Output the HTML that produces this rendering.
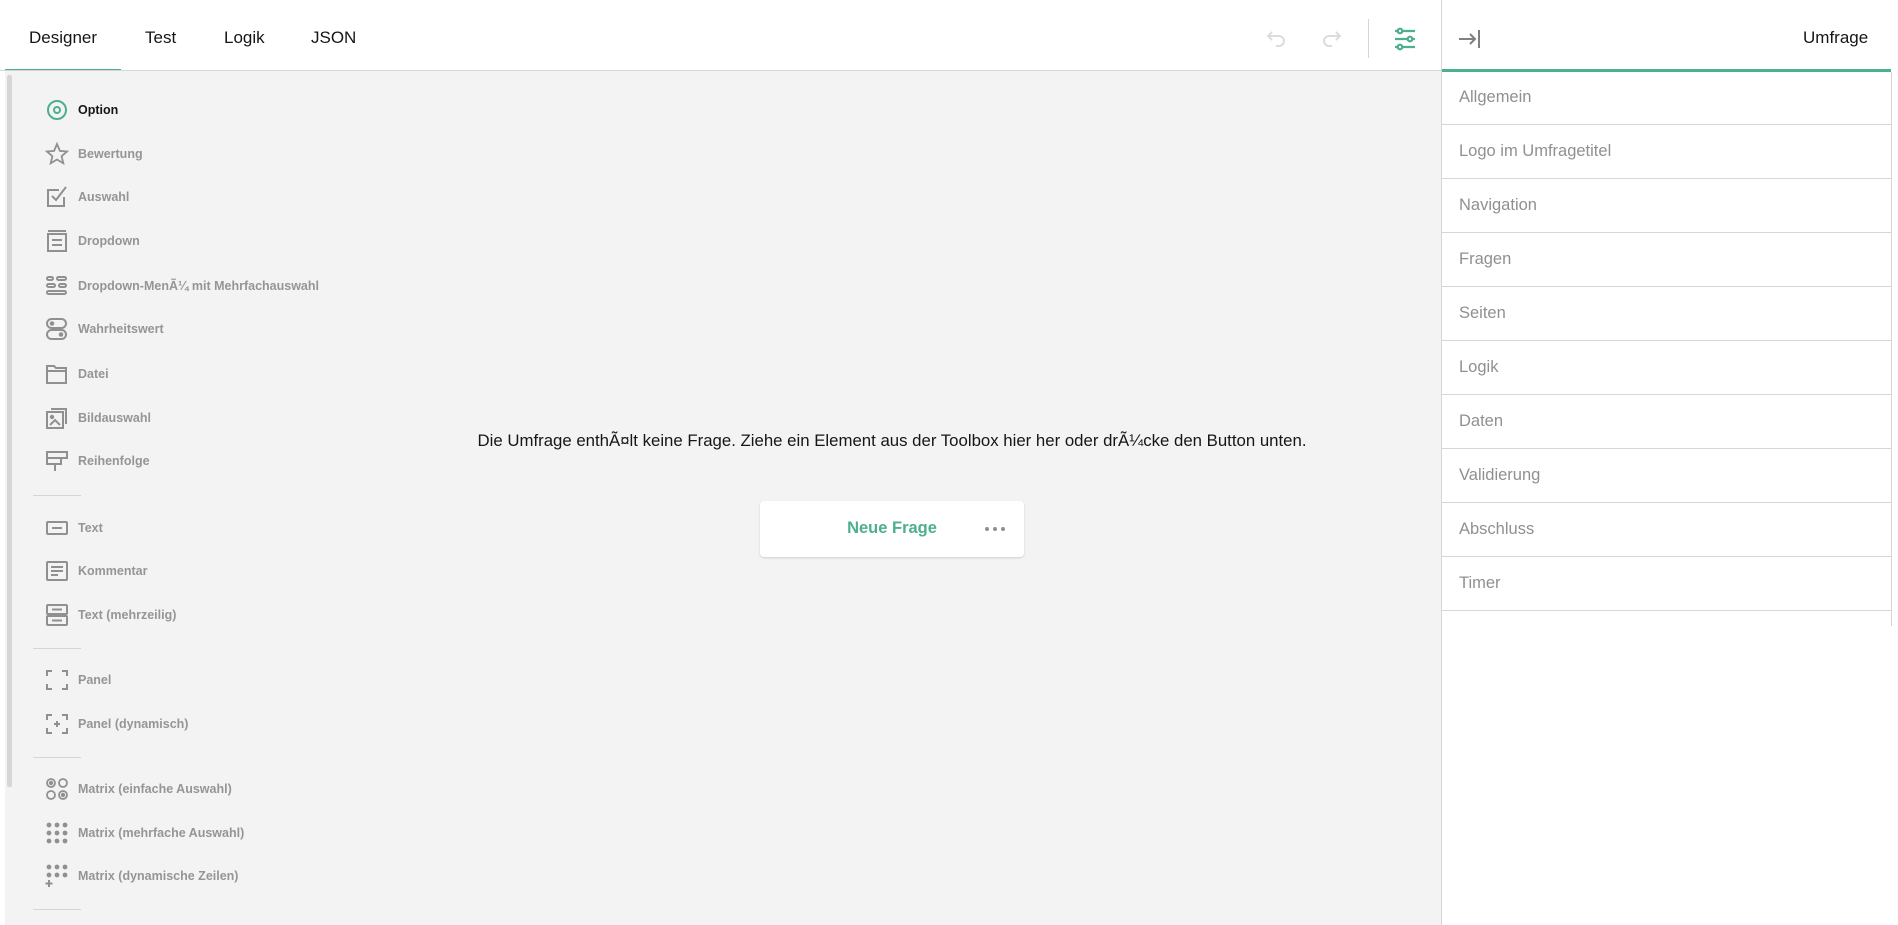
<!DOCTYPE html>
<html><head><meta charset="utf-8">
<style>
*{margin:0;padding:0;box-sizing:border-box}
body{width:1898px;height:925px;overflow:hidden;background:#fff;font-family:"Liberation Sans",sans-serif;position:relative}
.abs{position:absolute}
.tab{position:absolute;top:28px;font-size:17px;color:#161616}
.canvas{position:absolute;left:5px;top:71px;width:1436px;height:854px;background:#f3f3f3}
.item{position:absolute;left:45px;height:24px;display:flex;align-items:center}
.item svg{width:24px;height:24px;margin-right:9px;flex:none}
.item span{font-size:12.5px;font-weight:bold;color:#959595;white-space:nowrap}
.sep{position:absolute;left:33px;width:48px;height:1px;background:#d6d6d6}
.row{position:absolute;left:1442px;width:449px;height:54px;border-bottom:1px solid #d6d6d6;font-size:16.5px;color:#909090;padding-left:17px;line-height:53px}
</style></head><body>
<div class="tab" style="left:29px">Designer</div>
<div class="tab" style="left:145px">Test</div>
<div class="tab" style="left:224px">Logik</div>
<div class="tab" style="left:311px">JSON</div>
<div class="abs" style="left:5px;top:69px;width:116px;height:2px;background:#4caf8f"></div>
<div class="abs" style="left:0;top:70px;width:1442px;height:1px;background:#d6d6d6"></div>

<svg class="abs" style="left:1264px;top:26px" width="24" height="24" viewBox="0 0 24 24" fill="none" stroke="#dcdcdc" stroke-width="2"><path d="M8 6 L4 10 L8 14 M4 10 H15 a5 5 0 0 1 0 10 H12"/></svg>
<svg class="abs" style="left:1320px;top:26px" width="24" height="24" viewBox="0 0 24 24" fill="none" stroke="#dcdcdc" stroke-width="2"><path d="M16 6 L20 10 L16 14 M20 10 H9 a5 5 0 0 0 0 10 H12"/></svg>
<div class="abs" style="left:1368px;top:19px;width:1px;height:39px;background:#d6d6d6"></div>
<svg class="abs" style="left:1393px;top:27px" width="24" height="24" viewBox="0 0 24 24" fill="none" stroke="#4caf8f" stroke-width="2.2"><circle cx="7" cy="4" r="2.3"/><path d="M9.5 4H22M2 4h2.5"/><circle cx="17" cy="12" r="2.3"/><path d="M2 12h12.5M19.5 12H22"/><circle cx="7" cy="20" r="2.3"/><path d="M9.5 20H22M2 20h2.5"/></svg>

<div class="abs" style="left:1441px;top:0;width:1px;height:925px;background:#d6d6d6"></div>
<svg class="abs" style="left:1458px;top:27px" width="24" height="24" viewBox="0 0 24 24" fill="none" stroke="#808080" stroke-width="2"><path d="M1 12H17M12 7l5 5-5 5"/><path d="M21 3V21"/></svg>
<div class="abs" style="left:1803px;top:28px;font-size:17px;color:#161616">Umfrage</div>
<div class="abs" style="left:1442px;top:69px;width:449px;height:3px;background:#4caf8f"></div>
<div class="abs" style="left:1891px;top:72px;width:1px;height:554px;background:#d6d6d6"></div>
<div class="row" style="top:71px">Allgemein</div>
<div class="row" style="top:125px">Logo im Umfragetitel</div>
<div class="row" style="top:179px">Navigation</div>
<div class="row" style="top:233px">Fragen</div>
<div class="row" style="top:287px">Seiten</div>
<div class="row" style="top:341px">Logik</div>
<div class="row" style="top:395px">Daten</div>
<div class="row" style="top:449px">Validierung</div>
<div class="row" style="top:503px">Abschluss</div>
<div class="row" style="top:557px">Timer</div>

<div class="canvas"></div>
<div class="abs" style="left:7px;top:75px;width:5px;height:712px;background:#d6d6d6;border-radius:2px"></div>

<div class="item" style="top:98px"><svg viewBox="0 0 24 24" fill="none" stroke="#4caf8f" stroke-width="2"><circle cx="12" cy="12" r="9"/><circle cx="12" cy="12" r="3"/></svg><span style="color:#161616">Option</span></div>
<div class="item" style="top:142px"><svg viewBox="0 0 24 24" fill="none" stroke="#909090" stroke-width="1.8"><path d="M12 2l2.9 6.9 7.1.6-5.4 4.7 1.7 7.1L12 17.5 5.7 21.3l1.7-7.1L2 9.5l7.1-.6z"/></svg><span>Bewertung</span></div>
<div class="item" style="top:185px"><svg viewBox="0 0 24 24" fill="none" stroke="#909090" stroke-width="2"><path d="M19 12v9H3V5h11"/><path d="M7 11l4 4 10-13"/></svg><span>Auswahl</span></div>
<div class="item" style="top:229px"><svg viewBox="0 0 24 24" fill="none" stroke="#909090" stroke-width="2"><rect x="3" y="5" width="18" height="17"/><path d="M3 2h18M7 11h10M7 16h10"/></svg><span>Dropdown</span></div>
<div class="item" style="top:274px"><svg viewBox="0 0 24 24" fill="none" stroke="#909090" stroke-width="2"><rect x="2" y="3" width="6" height="3" rx="1.5"/><rect x="12" y="3" width="9" height="3" rx="1.5"/><rect x="2" y="10" width="8" height="3" rx="1.5"/><rect x="14" y="10" width="7" height="3" rx="1.5"/><rect x="2" y="17" width="19" height="3" rx="1.5"/></svg><span>Dropdown-MenÃ¼ mit Mehrfachauswahl</span></div>
<div class="item" style="top:317px"><svg viewBox="0 0 24 24" fill="none" stroke="#909090" stroke-width="2"><rect x="2" y="2" width="19" height="9" rx="4.5"/><rect x="2" y="13" width="19" height="9" rx="4.5"/><circle cx="7" cy="6.5" r="1.3" fill="#909090"/><circle cx="16" cy="17.5" r="1.3" fill="#909090"/></svg><span>Wahrheitswert</span></div>
<div class="item" style="top:362px"><svg viewBox="0 0 24 24" fill="none" stroke="#909090" stroke-width="2"><path d="M2 4h7l2 2h10v15H2z M2 9h19"/></svg><span>Datei</span></div>
<div class="item" style="top:406px"><svg viewBox="0 0 24 24" fill="none" stroke="#909090" stroke-width="2"><rect x="2" y="6" width="16" height="16"/><path d="M6 3h15v15"/><path d="M5 19l5-5 5 5"/><circle cx="7" cy="11" r="1.2" fill="#909090"/></svg><span>Bildauswahl</span></div>
<div class="item" style="top:449px"><svg viewBox="0 0 24 24" fill="none" stroke="#909090" stroke-width="2"><path d="M2 3h20v6H2zM2 9h14v6H2zM2 15h8v7"/></svg><span>Reihenfolge</span></div>
<div class="sep" style="top:495px"></div>
<div class="item" style="top:516px"><svg viewBox="0 0 24 24" fill="none" stroke="#909090" stroke-width="2"><rect x="2" y="6" width="20" height="12" rx="1"/><path d="M7 12h10"/></svg><span>Text</span></div>
<div class="item" style="top:559px"><svg viewBox="0 0 24 24" fill="none" stroke="#909090" stroke-width="2"><rect x="2" y="3" width="20" height="18" rx="1"/><path d="M6 8h12M6 12h12M6 16h7"/></svg><span>Kommentar</span></div>
<div class="item" style="top:603px"><svg viewBox="0 0 24 24" fill="none" stroke="#909090" stroke-width="2"><rect x="2" y="2" width="20" height="9" rx="1"/><rect x="2" y="13" width="20" height="9" rx="1"/><path d="M7 6.5h10M7 17.5h10"/></svg><span>Text (mehrzeilig)</span></div>
<div class="sep" style="top:648px"></div>
<div class="item" style="top:668px"><svg viewBox="0 0 24 24" fill="none" stroke="#909090" stroke-width="2"><path d="M2 8V3h5M17 3h5v5M22 16v5h-5M7 21H2v-5"/></svg><span>Panel</span></div>
<div class="item" style="top:712px"><svg viewBox="0 0 24 24" fill="none" stroke="#909090" stroke-width="2"><path d="M2 8V3h5M17 3h5v5M22 16v5h-5M7 21H2v-5M12 9v6M9 12h6"/></svg><span>Panel (dynamisch)</span></div>
<div class="sep" style="top:757px"></div>
<div class="item" style="top:777px"><svg viewBox="0 0 24 24" fill="none" stroke="#909090" stroke-width="1.8"><circle cx="6" cy="6" r="4"/><circle cx="6" cy="6" r="1.3" fill="#909090"/><circle cx="18" cy="6" r="4"/><circle cx="6" cy="18" r="4"/><circle cx="18" cy="18" r="4"/><circle cx="18" cy="18" r="1.3" fill="#909090"/></svg><span>Matrix (einfache Auswahl)</span></div>
<div class="item" style="top:821px"><svg viewBox="0 0 24 24" fill="#909090"><circle cx="4" cy="4" r="2.4"/><circle cx="12" cy="4" r="2.4"/><circle cx="20" cy="4" r="2.4"/><circle cx="4" cy="12" r="2.4"/><circle cx="12" cy="12" r="2.4"/><circle cx="20" cy="12" r="2.4"/><circle cx="4" cy="20" r="2.4"/><circle cx="12" cy="20" r="2.4"/><circle cx="20" cy="20" r="2.4"/></svg><span>Matrix (mehrfache Auswahl)</span></div>
<div class="item" style="top:864px"><svg viewBox="0 0 24 24" fill="#909090"><circle cx="4" cy="3" r="2.4"/><circle cx="12" cy="3" r="2.4"/><circle cx="20" cy="3" r="2.4"/><circle cx="4" cy="11" r="2.4"/><circle cx="12" cy="11" r="2.4"/><circle cx="20" cy="11" r="2.4"/><path d="M3 16h2v2.5h2.5v2H5V23H3v-2.5H.5v-2H3z"/></svg><span>Matrix (dynamische Zeilen)</span></div>
<div class="sep" style="top:909px"></div>

<div class="abs" style="left:392px;width:1000px;top:431px;text-align:center;font-size:16.8px;color:#161616;white-space:nowrap">Die Umfrage enthÃ¤lt keine Frage. Ziehe ein Element aus der Toolbox hier her oder drÃ¼cke den Button unten.</div>
<div class="abs" style="left:760px;top:501px;width:264px;height:56px;background:#fff;border-radius:4px;box-shadow:0 1px 2px rgba(0,0,0,.15)"></div>
<div class="abs" style="left:760px;top:519px;width:264px;text-align:center;font-size:16.5px;font-weight:bold;color:#4caf8f">Neue Frage</div>
<div class="abs" style="left:985px;top:527px;display:flex;gap:4px"><i style="width:4px;height:4px;border-radius:2px;background:#909090"></i><i style="width:4px;height:4px;border-radius:2px;background:#909090"></i><i style="width:4px;height:4px;border-radius:2px;background:#909090"></i></div>
</body></html>
